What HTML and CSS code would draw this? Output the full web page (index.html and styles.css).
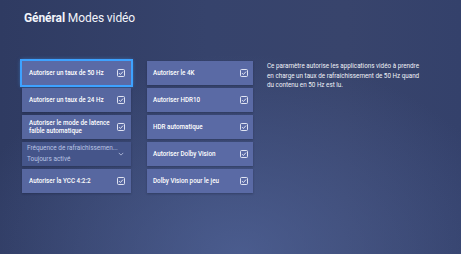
FILE: index.html
```html
<!DOCTYPE html>
<html lang="fr">
<head>
<meta charset="utf-8">
<link rel="stylesheet" href="styles.css">
</head>
<body>
<div class="screen">
  <h1 class="title"><b>Général</b> Modes vidéo</h1>
  <div class="content">
    <div class="col col-left">
      <div class="card focused"><span>Autoriser un taux de 50 Hz</span><svg class="chk" viewBox="0 0 8 8"><rect x="0.5" y="0.5" width="7" height="7" rx="1"/><path d="M2 4.1 L3.4 5.5 L6 2.6"/></svg></div>
      <div class="card"><span>Autoriser un taux de 24 Hz</span><svg class="chk" viewBox="0 0 8 8"><rect x="0.5" y="0.5" width="7" height="7" rx="1"/><path d="M2 4.1 L3.4 5.5 L6 2.6"/></svg></div>
      <div class="card"><span>Autoriser le mode de latence<br>faible automatique</span><svg class="chk" viewBox="0 0 8 8"><rect x="0.5" y="0.5" width="7" height="7" rx="1"/><path d="M2 4.1 L3.4 5.5 L6 2.6"/></svg></div>
      <div class="card dropdown"><span class="dd-text"><span>Fréquence de rafraîchissemen...</span><span>Toujours activé</span></span><svg class="chev" viewBox="0 0 8 5"><path d="M1 1 L4 4 L7 1"/></svg></div>
      <div class="card"><span>Autoriser la YCC 4:2:2</span><svg class="chk" viewBox="0 0 8 8"><rect x="0.5" y="0.5" width="7" height="7" rx="1"/><path d="M2 4.1 L3.4 5.5 L6 2.6"/></svg></div>
    </div>
    <div class="col col-right">
      <div class="card"><span>Autoriser le 4K</span><svg class="chk" viewBox="0 0 8 8"><rect x="0.5" y="0.5" width="7" height="7" rx="1"/><path d="M2 4.1 L3.4 5.5 L6 2.6"/></svg></div>
      <div class="card"><span>Autoriser HDR10</span><svg class="chk" viewBox="0 0 8 8"><rect x="0.5" y="0.5" width="7" height="7" rx="1"/><path d="M2 4.1 L3.4 5.5 L6 2.6"/></svg></div>
      <div class="card"><span>HDR automatique</span><svg class="chk" viewBox="0 0 8 8"><rect x="0.5" y="0.5" width="7" height="7" rx="1"/><path d="M2 4.1 L3.4 5.5 L6 2.6"/></svg></div>
      <div class="card"><span>Autoriser Dolby Vision</span><svg class="chk" viewBox="0 0 8 8"><rect x="0.5" y="0.5" width="7" height="7" rx="1"/><path d="M2 4.1 L3.4 5.5 L6 2.6"/></svg></div>
      <div class="card"><span>Dolby Vision pour le jeu</span><svg class="chk" viewBox="0 0 8 8"><rect x="0.5" y="0.5" width="7" height="7" rx="1"/><path d="M2 4.1 L3.4 5.5 L6 2.6"/></svg></div>
    </div>
    <p class="desc">Ce paramètre autorise les applications vidéo à prendre en charge un taux de rafraîchissement de 50 Hz quand du contenu en 50 Hz est lu.</p>
  </div>
</div>
</body>
</html>
```
FILE: styles.css
```css
html, body {
  margin: 0;
  padding: 0;
}
body {
  width: 461px;
  height: 254px;
  overflow: hidden;
  font-family: Roboto, "Noto Sans", sans-serif;
  color: #fff;
  background:
    radial-gradient(ellipse 280px 200px at 52% 100%, rgba(85,105,160,0.65), rgba(85,105,160,0) 100%),
    linear-gradient(90deg, #2f3b62 0%, #36436c 45%, #38446c 75%, #34416b 100%);
}
.screen {
  padding: 11px 0 0 24px;
}
.title {
  margin: 0;
  font-size: 12px;
  font-weight: 400;
  line-height: 14px;
  color: #f2f4fa;
  letter-spacing: -0.1px;
}
.title b {
  font-weight: 700;
}
.content {
  display: flex;
  align-items: flex-start;
  margin-top: 36px;
  margin-left: -2px;
}
.col {
  display: flex;
  flex-direction: column;
  gap: 3px;
}
.col-left {
  width: 109px;
}
.col-right {
  width: 106px;
  margin-left: 16px;
}
.card {
  height: 24px;
  box-sizing: border-box;
  display: flex;
  align-items: center;
  justify-content: space-between;
  padding: 0 6px 0 7px;
  background: #5767a0;
  font-size: 6.3px;
  line-height: 8px;
  font-weight: 500;
  color: #fff;
  box-shadow: 0 1px 2px rgba(20,25,50,0.35);
}
.col-right .card {
  padding: 0 5px 0 6px;
  background: #5a6aa5;
}
.focused {
  outline: 2px solid #3ea2ff;
  outline-offset: 0;
  box-shadow: 0 0 4px 1px rgba(70,160,255,0.7);
  background: #5a6aa6;
}
.chk {
  width: 8px;
  height: 8px;
  flex: none;
  fill: none;
  stroke: #eef1fa;
  stroke-width: 0.9;
}
.dropdown {
  background: #45558a;
  color: #b9c3e3;
  font-weight: 400;
  font-size: 6.4px;
  line-height: 7px;
  align-items: center;
  padding: 0 5px 0 5px;
}
.dd-text {
  display: flex;
  flex-direction: column;
  gap: 4px;
  min-width: 0;
  white-space: nowrap;
}
.chev {
  width: 6px;
  height: 4px;
  flex: none;
  fill: none;
  stroke: #c4cce8;
  stroke-width: 1;
  margin-right: 2px;
  margin-left: 1px;
}
.desc {
  margin: 1px 0 0 14px;
  width: 160px;
  font-size: 6.3px;
  line-height: 9.5px;
  color: #f0f2f8;
}
```
